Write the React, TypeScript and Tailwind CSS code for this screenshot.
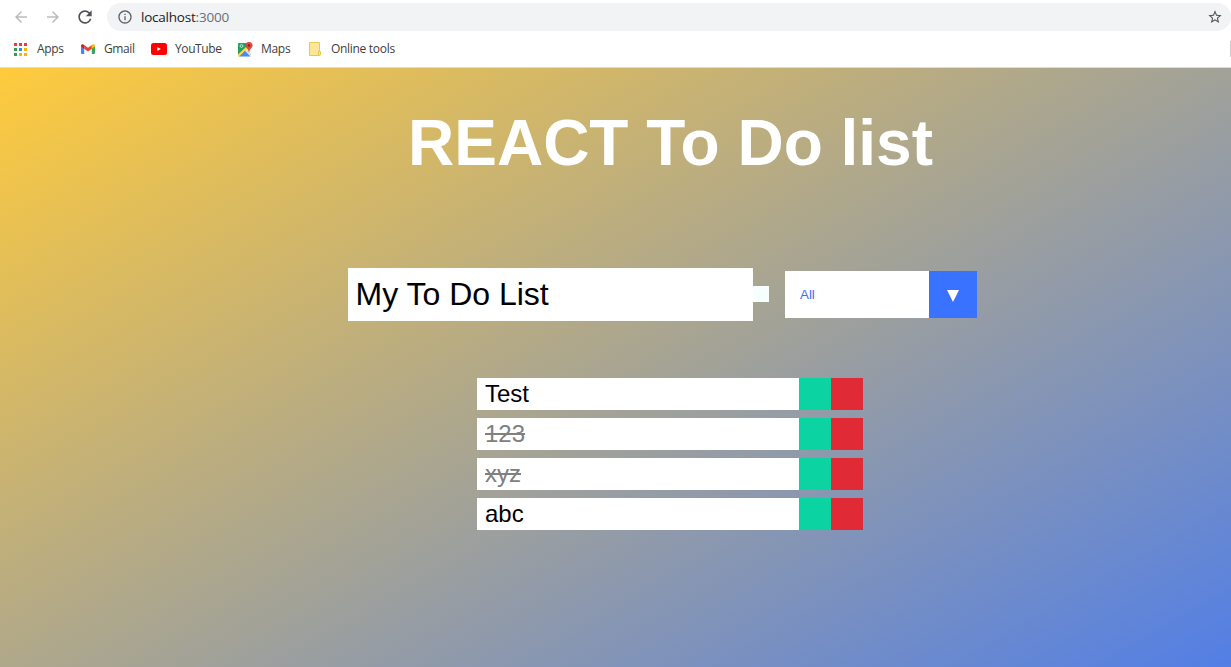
import type { ReactNode } from "react";
import { MdArrowBack, MdArrowForward, MdRefresh, MdStarBorder, MdInfoOutline } from "react-icons/md";

const todos = [
  { text: "Test", done: false },
  { text: "123", done: true },
  { text: "xyz", done: true },
  { text: "abc", done: false },
];

const dots = ["#f03a33", "#f03a33", "#f03a33", "#2f9e55", "#2b8af5", "#f9b208", "#2f9e55", "#f9b208", "#f9b208"];

function AppsIcon() {
  return (
    <svg width="13" height="13" viewBox="0 0 13 13" shapeRendering="crispEdges">
      {dots.map((c, i) => (
        <rect key={i} x={(i % 3) * 5} y={Math.floor(i / 3) * 5} width="3" height="3" fill={c} />
      ))}
    </svg>
  );
}

function GmailIcon() {
  return (
    <svg width="14" height="10" viewBox="0 0 14 11" preserveAspectRatio="none">
      <path d="M0 2v8a1 1 0 0 0 1 1h2.200V4z" fill="#4285f4" />
      <path d="M14 2v8a1 1 0 0 1-1 1h-2.200V4z" fill="#34a853" />
      <path d="M3.200 1.200 7 4.200l3.800-3v4L7 8.200l-3.800-3z" fill="#ea4335" />
      <path d="M0 1.800C0 .1 1.900-.4 3.200 1.200v4L0 2.800z" fill="#c5221f" />
      <path d="M14 1.800C14 .1 12.100-.4 10.800 1.200v4L14 2.800z" fill="#fbbc04" />
    </svg>
  );
}

function YouTubeIcon() {
  return (
    <svg width="16" height="12" viewBox="0 0 16 12">
      <rect width="16" height="12" rx="2.500" fill="#f00" />
      <path d="M6.300 4v4L9.800 6z" fill="#fff" />
    </svg>
  );
}

function MapsIcon() {
  return (
    <svg width="15" height="15" viewBox="0 0 15 15">
      <rect y="1" width="13" height="13.500" rx="1" fill="#f1f1f1" />
      <path d="M0 2a1 1 0 0 1 1-1h8v5L0 14z" fill="#1ea362" />
      <path d="M0 12.500 9 4l1.500 2L2 14.500H0z" fill="#ffd84d" />
      <path d="M1.200 14.500 7 8.700l5.500 5.800z" fill="#4a89f3" />
      <path d="M8 9.500 9.500 8l3.500 4v1.500z" fill="#d5d9dc" />
      <circle cx="3.500" cy="4" r="1.400" fill="none" stroke="#d9f2e3" strokeWidth=".8" />
      <path d="M11 0a3.600 3.600 0 0 0-3.600 3.600C7.400 6 10.300 6.700 10.700 10h.6c.4-3.300 3.300-4 3.300-6.400A3.600 3.600 0 0 0 11 0z" fill="#dd4b3e" />
      <circle cx="11" cy="3.500" r="1.200" fill="#8c231b" />
    </svg>
  );
}

function FolderIcon() {
  return (
    <svg width="13" height="14" viewBox="0 0 13 14">
      <path d="M.5.500h10v13H.5z" fill="#ffe694" stroke="#e9c84f" />
      <path d="M9.500 13v-3.500h2V13z" fill="#ffe694" stroke="#e9c84f" />
    </svg>
  );
}

function Bookmark({ icon, label, className }: { icon: ReactNode; label: string; className: string }) {
  return (
    <div className={`flex shrink-0 items-center ${className}`}>
      {icon}
      <span className="whitespace-nowrap">{label}</span>
    </div>
  );
}

function BrowserBar() {
  return (
    <header className="h-[68px] border-b border-[#d9dce0] bg-white font-['Open_Sans',sans-serif] text-[#3c4043]">
      <div className="flex h-[34px] items-center pl-3">
        <MdArrowBack className="size-[18px] text-[#babcbe]" />
        <MdArrowForward className="ml-[14px] size-[18px] text-[#babcbe]" />
        <MdRefresh className="ml-[13px] size-[20px] text-[#505357]" />
        <div className="ml-3 flex h-7 flex-1 items-center rounded-full bg-[#f1f3f4] pr-2 pl-[10px]">
          <MdInfoOutline className="size-4 text-[#5f6368]" />
          <span className="ml-2 pt-px text-[13.500px] tracking-[-0.220px] text-[#202124]">
            localhost<span className="text-[#6b6f74]">:3000</span>
          </span>
          <MdStarBorder className="ml-auto size-4 text-[#505357]" />
        </div>
      </div>
      <nav className="flex h-[30px] items-center text-[12px] tracking-[-0.300px]">
        <Bookmark icon={<AppsIcon />} label="Apps" className="w-[67px] gap-[10px] pl-[14px]" />
        <Bookmark icon={<GmailIcon />} label="Gmail" className="w-[70px] gap-[9px] pl-[14px] tracking-[-0.400px]" />
        <Bookmark icon={<YouTubeIcon />} label="YouTube" className="w-[87px] gap-2 pl-[14px] tracking-[-0.400px]" />
        <Bookmark icon={<MapsIcon />} label="Maps" className="w-[71px] gap-2 pl-[14px]" />
        <Bookmark icon={<FolderIcon />} label="Online tools" className="gap-[9px] pl-[14px]" />
        <span className="ml-auto h-4 w-px bg-[#c9cbce]" />
      </nav>
    </header>
  );
}

export default function App() {
  return (
    <div className="h-[667px] w-[1231px] overflow-hidden font-['Liberation_Sans',Arial,sans-serif]">
      <BrowserBar />
      <main className="h-[599px] w-[1341px] bg-[linear-gradient(150deg,#ffcb3d,#4a7bee)]">
        <h1 className="pt-[38px] text-center text-[64px] leading-[74px] font-bold text-white">REACT To Do list</h1>
        <form className="mt-[88px] flex h-[53px] items-center pl-[348px]">
          <div className="flex h-[53px] w-[405px] items-center bg-white pb-0.5 pl-[7.500px] text-[32px] text-black">
            My To Do List
          </div>
          <div className="mb-px size-4 bg-[#f7fffe]" />
          <div className="ml-4 flex h-[47px] w-48">
            <div className="flex flex-1 items-center bg-white pl-[15px] text-[13.333px] text-[#3771fd]">All</div>
            <div className="flex w-12 items-center justify-center bg-[#3872ff] pt-[3px]">
              <svg width="12" height="12" viewBox="0 0 12 12">
                <path d="M0 0h12L6 12z" fill="#fff" />
              </svg>
            </div>
          </div>
        </form>
        <ul className="mt-[57px] flex flex-col gap-2 pl-[477px]">
          {todos.map((t) => (
            <li key={t.text} className="flex h-8 w-[386px] bg-white text-[24px] leading-8">
              <span className={t.done ? "flex-1 pl-2 text-[#808080]" : "flex-1 pl-2 text-black"}>
                <span className={t.done ? "line-through" : ""}>{t.text}</span>
              </span>
              <span className="w-8 bg-[#0bd4a2]" />
              <span className="w-8 bg-[#e02a35]" />
            </li>
          ))}
        </ul>
      </main>
    </div>
  );
}
